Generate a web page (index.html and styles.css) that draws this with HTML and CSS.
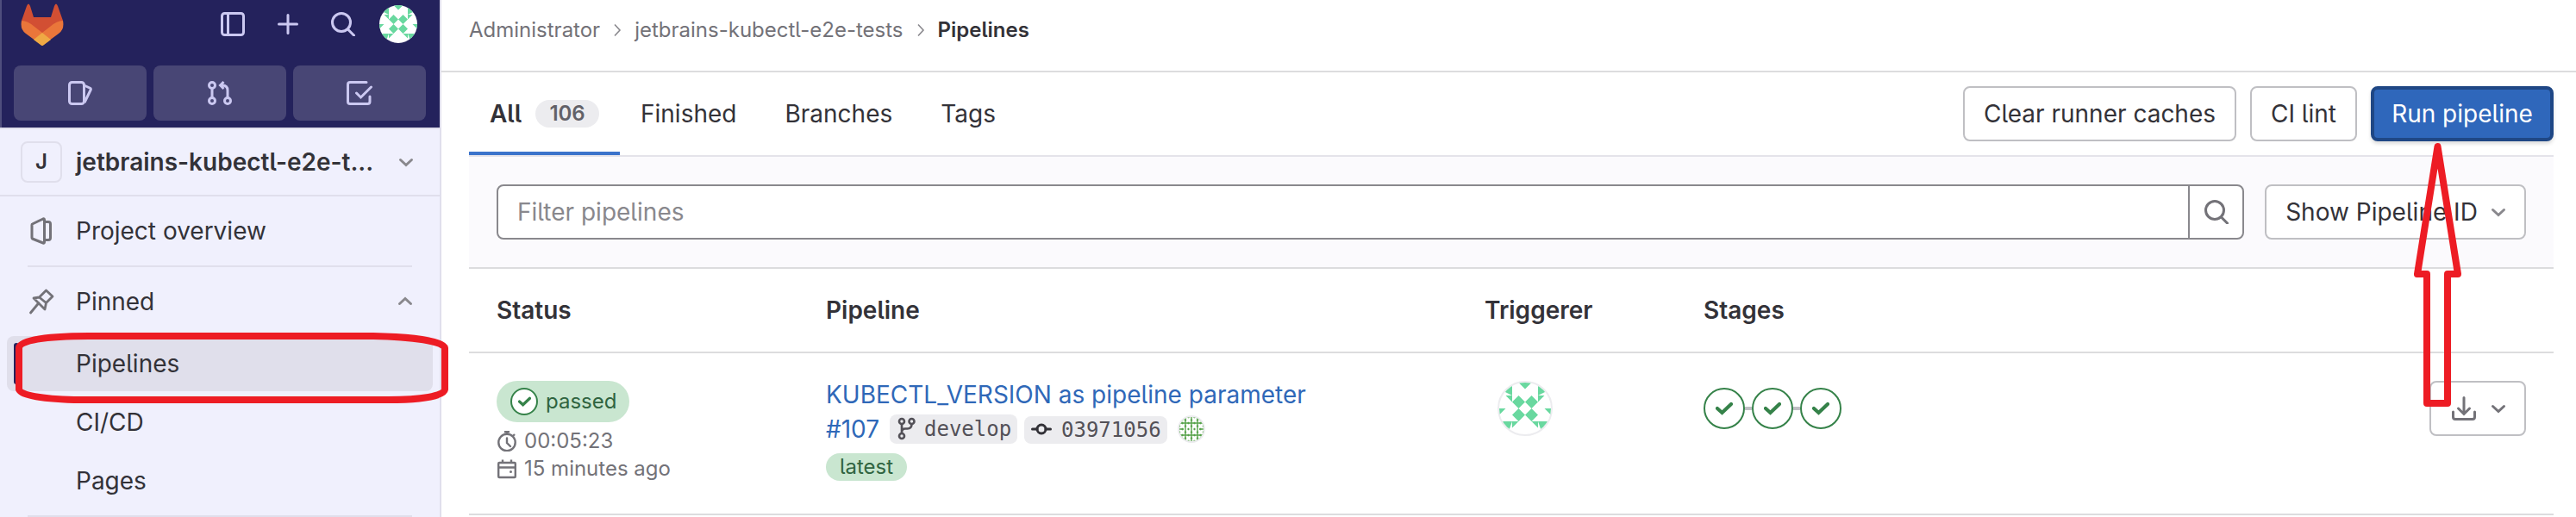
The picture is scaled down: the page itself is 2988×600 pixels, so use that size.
FILE: index.html
```html
<!DOCTYPE html>
<html lang="en">
<head>
<meta charset="utf-8">
<title>Pipelines</title>
<link rel="stylesheet" href="styles.css">
</head>
<body>
<svg class="defs" width="0" height="0" aria-hidden="true">
  <defs>
    <symbol id="chevron" viewBox="0 0 20 20"><path d="M3.500 7.500 10 13.500 16.500 7.500" fill="none" stroke="currentColor" stroke-width="3" stroke-linecap="round" stroke-linejoin="miter"/></symbol>
    <symbol id="search" viewBox="0 0 28 28"><circle cx="12" cy="12" r="10.500" fill="none" stroke="currentColor" stroke-width="3"/><path d="M20 20.500 26.500 27" stroke="currentColor" stroke-width="3" stroke-linecap="round"/></symbol>
    <symbol id="check" viewBox="0 0 20 16"><path d="M2 8 7.500 13 18 3" fill="none" stroke="currentColor" stroke-width="4.200" stroke-linecap="round"/></symbol>
    <symbol id="identicon" viewBox="-4 -4 8 8">
      <g fill="#69d89f">
        <path d="M-1-4H1L0-3zM-2-4V-2L-3-2.500-4-3zM2-4V-2L3-2.500 4-3zM-3-2H-2V-1zM3-2H2V-1zM-4 0H-3L-4 1zM4 0H3L4 1zM-4 2H-2L-2.700 4zM4 2H2L2.700 4zM-2 2H-1L-2 3zM2 2H1L2 3z"/>
        <path d="M-1-2 0-1-1 0-2-1zM1-2 2-1 1 0 0-1zM-1 0 0 1-1 2-2 1zM1 0 2 1 1 2 0 1z"/>
      </g>
    </symbol>
  </defs>
</svg>
<div class="app">
  <aside class="sidebar">
    <header class="topbar">
      <div class="brand-row">
        <svg class="logo" width="50" height="50" viewBox="0 0 50 50">
          <path fill="#d24f33" d="M9 .5Q10 .5 11 3L15 16H35L39 3Q40 .5 41 .5T43 3L49 20 25 38 1 20 7 3Q8 .5 9 .5z"/>
          <path fill="#ea763a" d="M1 20Q8 20 16 27L25 34 34 27Q42 20 49 20Q51 30 44 35L25 49 6 35Q-1 30 1 20z"/>
          <path fill="#efa944" d="M15 42 25 34 35 42 27 48Q25 50 23 48z"/>
        </svg>
        <div class="tools">
          <svg width="28" height="28" viewBox="0 0 28 28" fill="none" stroke="currentColor" stroke-width="3"><rect x="1.500" y="1.500" width="25" height="25" rx="3"/><path d="M8.500 2V26"/></svg>
          <svg width="28" height="28" viewBox="0 0 28 28" stroke="currentColor" stroke-width="3" stroke-linecap="round"><path d="M14 3.500V24.500M3.500 14H24.500"/></svg>
          <svg width="28" height="28"><use href="#search"/></svg>
          <span class="user"><svg width="44" height="44"><use href="#identicon"/></svg></span>
        </div>
      </div>
      <div class="shortcuts">
        <a><svg width="28" height="28" viewBox="0 0 28 28" fill="none" stroke="currentColor" stroke-width="3" stroke-linejoin="round"><rect x="1.500" y="1.500" width="17" height="25" rx="3"/><path d="M18.500 5 26 8.500Q26.500 9 26.300 10L19 25"/></svg></a>
        <a><svg width="28" height="28" viewBox="0 0 28 28" fill="none" stroke="currentColor" stroke-width="3"><circle cx="5" cy="5" r="3.500"/><circle cx="5" cy="23" r="3.500"/><circle cx="23" cy="23" r="3.500"/><path d="M5 8.500V19.500M23 19.500V11Q23 5 17 5H15M18.500 1 14.500 5 18.500 9"/></svg></a>
        <a><svg width="30" height="28" viewBox="0 0 30 28" fill="none" stroke="currentColor" stroke-width="3" stroke-linecap="round"><path d="M23 1.500H4Q1.500 1.500 1.500 4V24Q1.500 26.500 4 26.500H24.500Q27 26.500 27 24V18M11.500 14 16.500 19 28.500 7"/></svg></a>
      </div>
    </header>
    <div class="project">
      <span class="letter">J</span>
      <strong>jetbrains-kubectl-e2e-t...</strong>
      <svg class="muted" width="20" height="20"><use href="#chevron"/></svg>
    </div>
    <nav class="menu">
      <a class="item"><svg class="lead" width="32" height="32" viewBox="0 0 32 32" fill="none" stroke="currentColor" stroke-width="3" stroke-linejoin="round"><path d="M5.500 8 18 2Q19.500 1.500 19.500 3V29Q19.500 30.500 18 30L5.500 25Q5 24.500 5 23.500V9Q5 8 5.500 8zM19.500 5.500H24Q26.500 5.500 26.500 8V24Q26.500 26.500 24 26.500H19.500"/></svg>Project overview</a>
      <hr>
      <a class="item"><svg class="lead" width="32" height="32" viewBox="0 0 32 32" fill="none" stroke="currentColor" stroke-width="2.800" stroke-linejoin="round" stroke-linecap="round"><path d="M3.500 29 13 17.500M13.500 11 21.500 3 29 10 21.500 17.500 20 25 7 12zM13.500 11 21.500 17.500"/></svg>Pinned<svg class="tail muted flip" width="20" height="20"><use href="#chevron"/></svg></a>
      <div class="group">
        <a class="item active">Pipelines</a>
        <a class="item">CI/CD</a>
        <a class="item">Pages</a>
      </div>
      <hr>
    </nav>
  </aside>

  <main class="main">
    <div class="crumbs">
      <span>Administrator</span>
      <svg width="10" height="16" viewBox="0 0 10 16"><path d="M2 1.500 8 8 2 14.500" fill="none" stroke="#89888d" stroke-width="1.600"/></svg>
      <span>jetbrains-kubectl-e2e-tests</span>
      <svg width="10" height="16" viewBox="0 0 10 16"><path d="M2 1.500 8 8 2 14.500" fill="none" stroke="#89888d" stroke-width="1.600"/></svg>
      <strong>Pipelines</strong>
    </div>
    <div class="content">
      <div class="tabs">
        <a class="tab current"><strong>All</strong><span class="count">106</span></a>
        <a class="tab">Finished</a>
        <a class="tab">Branches</a>
        <a class="tab">Tags</a>
        <div class="actions">
          <button class="btn clear">Clear runner caches</button>
          <button class="btn lint">CI lint</button>
          <button class="btn run">Run pipeline</button>
        </div>
      </div>
      <div class="filter">
        <div class="field">
          <span class="placeholder">Filter pipelines</span>
          <span class="go"><svg width="28" height="28"><use href="#search"/></svg></span>
        </div>
        <button class="btn show">Show Pipeline ID<svg class="muted" width="20" height="20"><use href="#chevron"/></svg></button>
      </div>
      <div class="row head">
        <span>Status</span><span>Pipeline</span><span>Triggerer</span><span>Stages</span><span></span>
      </div>
      <div class="row body">
        <div class="status">
          <span class="passed"><span class="ring"><svg width="15" height="12"><use href="#check"/></svg></span>passed</span>
          <span class="meta"><svg width="24" height="24" viewBox="0 0 24 24" fill="none" stroke="currentColor" stroke-width="2.400"><circle cx="12" cy="13.500" r="9.700"/><path d="M12 8.500V14L16 18" stroke-linecap="round"/><path d="M12 4V1M9 1.200H15M19 6 21 4"/></svg>00:05:23</span>
          <span class="meta"><svg width="24" height="24" viewBox="0 0 24 24" fill="none" stroke="currentColor" stroke-width="2.400"><rect x="2.200" y="5" width="19.600" height="17" rx="1"/><path d="M2 10.500H22M7 1.500V5M17 1.500V5"/><circle cx="16.500" cy="15.500" r="1.500" fill="currentColor" stroke="none"/></svg>15 minutes ago</span>
        </div>
        <div class="pipeline">
          <a class="title">KUBECTL_VERSION as pipeline parameter</a>
          <div class="refs">
            <a class="id">#107</a>
            <span class="chip branch"><svg width="24" height="28" viewBox="0 0 24 28" fill="none" stroke="currentColor" stroke-width="2.600"><circle cx="6" cy="5" r="3"/><circle cx="17.500" cy="5" r="3"/><circle cx="6" cy="22" r="3"/><path d="M6 8V19M17.500 8Q17.500 13.500 12.500 13.500H10Q6 13.500 6 18"/></svg>develop</span>
            <span class="chip commit"><svg width="24" height="24" viewBox="0 0 24 24" fill="none" stroke="#333238" stroke-width="3"><circle cx="12" cy="11" r="5"/><path d="M1.500 11H7M17 11H22.500" stroke-linecap="round"/></svg>03971056</span>
            <svg class="author" width="32" height="32" viewBox="0 0 32 32">
              <defs>
                <clipPath id="round"><circle cx="16" cy="16" r="14"/></clipPath>
                <pattern id="lattice" width="7" height="7" patternUnits="userSpaceOnUse" x="16" y="16"><path fill="#fff" d="M0 0H2L3.500 1.500 5 0H7V2L5.500 3.500 7 5V7H5L3.500 5.500 2 7H0V5L1.500 3.500 0 2z"/></pattern>
              </defs>
              <circle cx="16" cy="16" r="15" fill="#fff" stroke="#ececef" stroke-width="2"/>
              <g clip-path="url(#round)"><path fill="#57a24b" d="M0 0H32V32H0z"/><path fill="url(#lattice)" d="M0 0H32V32H0z"/><path fill="none" stroke="#57a24b" stroke-width="1.400" d="M9 0V32M16 0V32M23 0V32M0 9H32M0 16H7M25 16H32M0 23H32"/></g>
            </svg>
          </div>
          <span class="latest">latest</span>
        </div>
        <div class="trigger"><span class="face"><svg width="60" height="60"><use href="#identicon"/></svg></span></div>
        <div class="stages">
          <span class="stage"><svg width="20" height="16"><use href="#check"/></svg></span>
          <i></i>
          <span class="stage"><svg width="20" height="16"><use href="#check"/></svg></span>
          <i></i>
          <span class="stage"><svg width="20" height="16"><use href="#check"/></svg></span>
        </div>
        <div class="end">
          <button class="btn download">
            <svg width="28" height="28" viewBox="0 0 28 28" fill="none" stroke="currentColor" stroke-width="3" stroke-linecap="round"><path d="M14 1.500V20M7.500 14 14 20.500 20.500 14M1.500 18V24Q1.500 26.500 4 26.500H24Q26.500 26.500 26.500 24V18"/></svg>
            <svg width="20" height="20"><use href="#chevron"/></svg>
          </button>
        </div>
      </div>
    </div>
  </main>
</div>
<svg class="marks" width="2988" height="600" viewBox="0 0 2988 600" fill="none" stroke="#ed1c24" stroke-width="8" stroke-linejoin="round">
  <path d="M22 404C22 395 52 390 103 390H433C478 391 515 396 516 404V452C515 460 488 464 450 464H86C48 463 24 459 22 452z"/>
  <path d="M2827.500 170 2804 318H2815V468H2839V318H2851z"/>
</svg>
</body>
</html>
```
FILE: styles.css
```css
* { box-sizing: border-box; }
body {
  margin: 0;
  font-family: Inter, "Liberation Sans", sans-serif;
  font-size: 28px;
  line-height: 40px;
  color: #333238;
  background: #fff;
  font-feature-settings: "cv05";
  overflow: hidden;
}
strong { font-weight: 600; }
svg { display: block; flex: none; }
.defs { position: absolute; }
.marks { position: absolute; left: 0; top: 0; }
.muted { color: #89888d; }
.flip { transform: rotate(180deg); }
.app { display: flex; width: 2988px; height: 600px; overflow: hidden; }

.sidebar { flex: none; width: 512px; background: #f0f0fd; border-right: 2px solid #e0dfec; }
.topbar { height: 148px; background: #24225c; border-left: 2px solid #4f4e7d; color: #cbc8f1; }
.brand-row { display: flex; justify-content: space-between; height: 76px; padding: 4px 26px 0 22px; }
.tools { display: flex; align-items: center; gap: 36px; height: 48px; }
.tools .user { margin-left: -8px; }
.user { width: 44px; height: 44px; border-radius: 50%; background: #fff; overflow: hidden; }
.shortcuts { display: grid; grid-template-columns: repeat(3, 154px); gap: 8px; padding-left: 14px; }
.shortcuts a { display: flex; align-items: center; justify-content: center; height: 64px; border-radius: 8px; background: #484675; }
.project { display: flex; align-items: center; height: 80px; padding: 0 29px 0 24px; border-top: 2px solid #e0dfec; border-bottom: 2px solid #e0dfec; }
.project strong { flex: 1; }
.letter { width: 48px; height: 48px; margin-right: 16px; border: 2px solid #e0dfec; border-radius: 8px; font-size: 24px; font-weight: 600; line-height: 44px; text-align: center; }
.menu { padding-top: 8px; }
.menu hr { width: 446px; height: 2px; margin: 8px 32px; border: 0; background: #e0dfec; }
.item { display: flex; align-items: center; height: 64px; margin: 0 8px; padding-left: 80px; border-radius: 8px; }
.lead { margin: 0 24px 0 -56px; color: #737278; }
.tail { margin-left: auto; margin-right: 22px; }
.group { display: grid; gap: 4px; padding-top: 8px; }
.active { background: #e0dfeb; }
.active::before { content: ""; width: 6px; height: 48px; margin: 0 66px 0 -72px; border-radius: 3px; background: #24225c; }

.main { flex: 1; }
.crumbs { display: flex; align-items: center; gap: 15px; height: 84px; padding: 0 32px 12px; border-bottom: 2px solid #dcdcde; font-size: 24px; color: #737278; }
.crumbs strong { color: #333238; }
.content { width: 2418px; margin-left: 32px; }
.tabs { display: flex; height: 98px; border-bottom: 2px solid #e4e3ea; }
.tab { padding: 28px 24px 0; height: 96px; margin-right: 8px; }
.tab.current { display: flex; gap: 16px; width: 175px; margin-right: 0; border-bottom: 4px solid #3b73cb; }
.count { width: 74px; height: 32px; margin-top: 4px; border-radius: 16px; background: #ececef; color: #626168; font-size: 24px; font-weight: 600; line-height: 32px; text-align: center; flex: none; }
.actions { display: flex; gap: 16px; margin-left: auto; padding-top: 16px; }
.btn { display: flex; align-items: center; justify-content: center; height: 64px; padding: 0; border: 2px solid #bfbfc3; border-radius: 8px; background: #fff; color: #333238; font: inherit; font-feature-settings: inherit; }
.clear { width: 317px; }
.lint { width: 124px; }
.run { width: 212px; border: 4px solid #1f4785; background: #2f67bb; color: #fff; box-shadow: 0 3px 4px #0002; }
.filter { display: flex; gap: 24px; height: 130px; padding: 32px; background: #fbfafd; border-bottom: 2px solid #dcdcde; }
.field { display: flex; width: 2027px; height: 64px; border: 2px solid #89888d; border-radius: 8px; background: #fff; }
.placeholder { flex: 1; padding: 10px 22px; color: #89888d; }
.go { display: flex; align-items: center; justify-content: center; width: 63px; border-left: 2px solid #89888d; color: #737278; }
.show { width: 303px; padding-left: 2px; gap: 14px; }
.row { display: grid; grid-template-columns: 382px 764px 254px 1fr 112px; padding: 0 32px; border-bottom: 2px solid #dcdcde; }
.head { height: 98px; padding-top: 28px; font-weight: 600; }
.body { height: 188px; padding-top: 32px; }
.passed { display: flex; align-items: center; gap: 9px; width: 154px; height: 48px; padding-left: 16px; border-radius: 24px; background: #c9e6d0; color: #306440; font-size: 24px; }
.ring { display: flex; align-items: center; justify-content: center; width: 32px; height: 32px; border: 2px solid #358249; border-radius: 50%; background: #fff; color: #358249; }
.meta { display: flex; align-items: center; gap: 8px; height: 32px; color: #737278; font-size: 24px; }
.passed + .meta { margin-top: 6px; }
.title, .id { color: #2f68b8; }
.title { display: block; margin-top: -4px; }
.refs { display: flex; align-items: center; height: 40px; }
.id { width: 74px; }
.chip { display: flex; align-items: center; height: 32px; margin-top: 2px; border-radius: 8px; background: #ececef; color: #535158; font: 24px/32px "DejaVu Sans Mono", monospace; }
.branch { width: 148px; height: 34px; margin-top: 0; padding-left: 8px; gap: 8px; margin-right: 8px; }
.commit { width: 166px; padding-left: 8px; gap: 11px; margin-right: 12px; }
.latest { display: block; width: 94px; height: 32px; margin-top: 8px; border-radius: 16px; background: #c9e6d0; color: #306440; font-size: 24px; line-height: 32px; text-align: center; }
.trigger { padding-left: 15px; }
.face { display: block; width: 64px; height: 64px; border: 2px solid #ececef; border-radius: 50%; overflow: hidden; }
.stages { display: flex; align-items: center; height: 64px; }
.stage { display: flex; align-items: center; justify-content: center; width: 48px; height: 48px; border: 2px solid #358249; border-radius: 50%; color: #358249; }
.stages i { width: 8px; height: 4px; background: #bfbfc3; }
.download { width: 112px; padding-left: 3px; gap: 16px; color: #737278; }
```
